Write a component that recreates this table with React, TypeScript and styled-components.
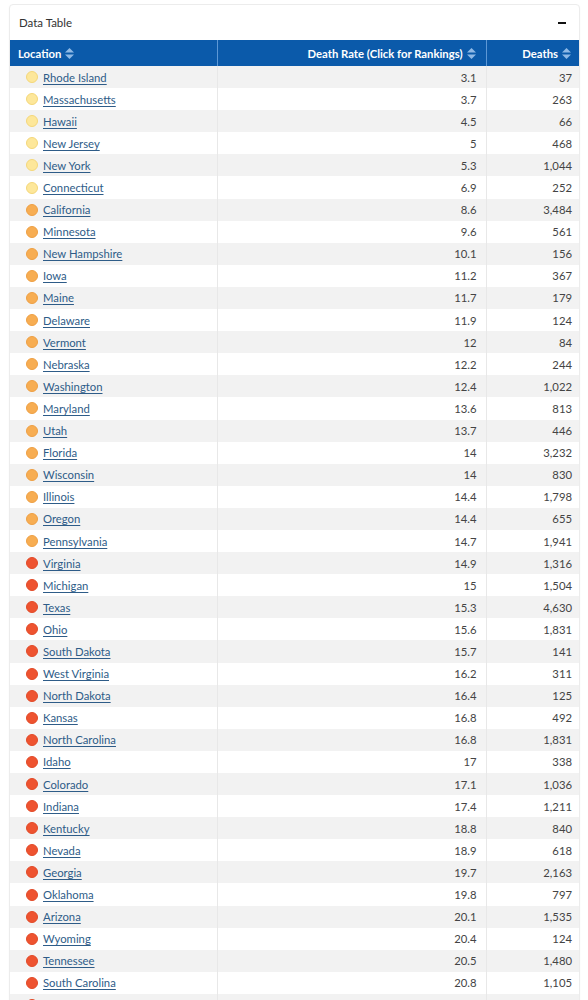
import React from "react";
import styled, { createGlobalStyle } from "styled-components";

const Global = createGlobalStyle`
  html, body { margin: 0; padding: 0; background: #ffffff; }
  body { font-family: "Lato", "Noto Sans", sans-serif; }
`;

type Level = "low" | "mid" | "high";
type Row = [string, string, string, Level];

const rows: Row[] = [
  ["Rhode Island", "3.1", "37", "low"],
  ["Massachusetts", "3.7", "263", "low"],
  ["Hawaii", "4.5", "66", "low"],
  ["New Jersey", "5", "468", "low"],
  ["New York", "5.3", "1,044", "low"],
  ["Connecticut", "6.9", "252", "low"],
  ["California", "8.6", "3,484", "mid"],
  ["Minnesota", "9.6", "561", "mid"],
  ["New Hampshire", "10.1", "156", "mid"],
  ["Iowa", "11.2", "367", "mid"],
  ["Maine", "11.7", "179", "mid"],
  ["Delaware", "11.9", "124", "mid"],
  ["Vermont", "12", "84", "mid"],
  ["Nebraska", "12.2", "244", "mid"],
  ["Washington", "12.4", "1,022", "mid"],
  ["Maryland", "13.6", "813", "mid"],
  ["Utah", "13.7", "446", "mid"],
  ["Florida", "14", "3,232", "mid"],
  ["Wisconsin", "14", "830", "mid"],
  ["Illinois", "14.4", "1,798", "mid"],
  ["Oregon", "14.4", "655", "mid"],
  ["Pennsylvania", "14.7", "1,941", "mid"],
  ["Virginia", "14.9", "1,316", "high"],
  ["Michigan", "15", "1,504", "high"],
  ["Texas", "15.3", "4,630", "high"],
  ["Ohio", "15.6", "1,831", "high"],
  ["South Dakota", "15.7", "141", "high"],
  ["West Virginia", "16.2", "311", "high"],
  ["North Dakota", "16.4", "125", "high"],
  ["Kansas", "16.8", "492", "high"],
  ["North Carolina", "16.8", "1,831", "high"],
  ["Idaho", "17", "338", "high"],
  ["Colorado", "17.1", "1,036", "high"],
  ["Indiana", "17.4", "1,211", "high"],
  ["Kentucky", "18.8", "840", "high"],
  ["Nevada", "18.9", "618", "high"],
  ["Georgia", "19.7", "2,163", "high"],
  ["Oklahoma", "19.8", "797", "high"],
  ["Arizona", "20.1", "1,535", "high"],
  ["Wyoming", "20.4", "124", "high"],
  ["Tennessee", "20.5", "1,480", "high"],
  ["South Carolina", "20.8", "1,105", "high"],
  ["Missouri", "21.4", "1,323", "high"],
  ["Montana", "21.7", "223", "high"],
];

const dotColors: Record<Level, { fill: string; ring: string }> = {
  low: { fill: "#fde79a", ring: "#f4d77a" },
  mid: { fill: "#f7ad52", ring: "#eea044" },
  high: { fill: "#ee5330", ring: "#e24a28" },
};

const Page = styled.div`
  padding: 4px 8px 0 9px;
`;

const Card = styled.div`
  border: 1px solid #ececec;
  border-radius: 4px;
  background: #fff;
  box-shadow: 0 1px 2px rgba(0, 0, 0, 0.04);
  overflow: hidden;
`;

const CardHeader = styled.div`
  height: 35px;
  display: flex;
  align-items: center;
  justify-content: space-between;
  padding: 0 13px 0 9px;
  font-size: 11.5px;
  color: #333;
`;

const Minus = styled.span`
  width: 8px;
  height: 2px;
  background: #111;
  display: block;
`;

const Table = styled.table`
  width: 100%;
  border-collapse: collapse;
  table-layout: fixed;
  font-size: 11.3px;
`;

const Th = styled.th<{ $align?: "left" | "right"; $w: number }>`
  width: ${(p) => p.$w}px;
  height: 26px;
  background: #0b5aaa;
  color: #fff;
  font-weight: 700;
  text-align: ${(p) => p.$align || "left"};
  padding: 0 10px 0 8px;
  box-sizing: border-box;
  border-left: 1px solid #5d98d6;
  white-space: nowrap;
  &:first-child { border-left: none; }
`;

const SortIcon = styled.svg`
  width: 9px;
  height: 11px;
  margin-left: 4px;
  vertical-align: -1px;
`;

const Tr = styled.tr<{ $striped: boolean }>`
  height: 22.1px;
  background: ${(p) => (p.$striped ? "#f2f2f2" : "#fff")};
`;

const Td = styled.td<{ $align?: "left" | "right" }>`
  padding: 0 9px 0 16px;
  text-align: ${(p) => p.$align || "left"};
  color: #444;
  border-left: 1px solid #e8e8e8;
  white-space: nowrap;
  &:first-child { border-left: none; }
`;

const NumTd = styled(Td)`
  padding: 0 9px 0 8px;
`;

const LocCell = styled.div`
  display: flex;
  align-items: center;
  gap: 5px;
`;

const Dot = styled.span<{ $level: Level }>`
  width: 10px;
  height: 10px;
  border-radius: 50%;
  background: ${(p) => dotColors[p.$level].fill};
  border: 1px solid ${(p) => dotColors[p.$level].ring};
  flex: none;
`;

const Link = styled.a`
  color: #2e5c88;
  text-decoration: underline;
  text-underline-offset: 2px;
`;

const Sort = () => (
  <SortIcon viewBox="0 0 9 11">
    <path d="M4.5 0 L9 4.6 H0 Z" fill="#8fb9e6" />
    <path d="M4.5 11 L9 6.4 H0 Z" fill="#8fb9e6" />
  </SortIcon>
);

export default function App() {
  return (
    <>
      <Global />
      <Page>
        <Card>
          <CardHeader>
            <span>Data Table</span>
            <Minus />
          </CardHeader>
          <Table>
            <thead>
              <tr>
                <Th $w={207}>
                  Location
                  <Sort />
                </Th>
                <Th $w={269} $align="right">
                  Death Rate (Click for Rankings)
                  <Sort />
                </Th>
                <Th $w={95} $align="right">
                  Deaths
                  <Sort />
                </Th>
              </tr>
            </thead>
            <tbody>
              {rows.map(([name, rate, deaths, level], i) => (
                <Tr key={name} $striped={i % 2 === 0}>
                  <Td>
                    <LocCell>
                      <Dot $level={level} />
                      <Link href="#">{name}</Link>
                    </LocCell>
                  </Td>
                  <NumTd $align="right">{rate}</NumTd>
                  <NumTd $align="right">{deaths}</NumTd>
                </Tr>
              ))}
            </tbody>
          </Table>
        </Card>
      </Page>
    </>
  );
}
